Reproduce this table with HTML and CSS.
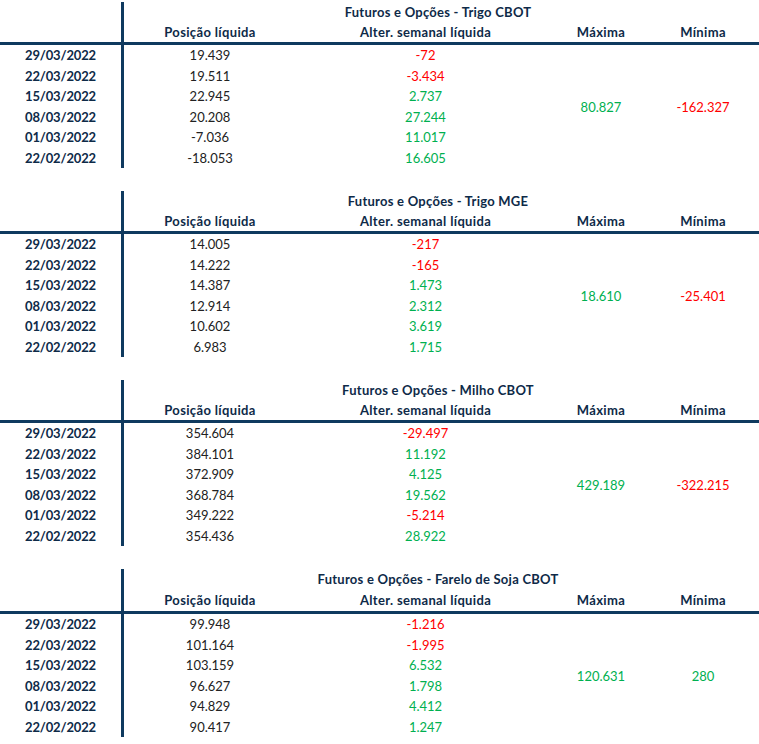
FILE: index.html
```html
<!DOCTYPE html>
<html lang="pt">
<head>
<meta charset="utf-8">
<title>Futuros e Opções</title>
<link rel="stylesheet" href="styles.css">
</head>
<body>
<div class="page">

<table class="cot">
<colgroup><col class="c-date"><col class="c-pos"><col class="c-alt"><col class="c-max"><col class="c-min"></colgroup>
<tr class="r-title"><td class="date"></td><td class="title" colspan="4">Futuros e Opções - Trigo CBOT</td></tr>
<tr class="r-head"><td class="date"></td><td>Posição líquida</td><td>Alter. semanal líquida</td><td>Máxima</td><td>Mínima</td></tr>
<tr class="r-data"><td class="date">29/03/2022</td><td class="pos">19.439</td><td class="neg">-72</td><td class="up big" rowspan="6">80.827</td><td class="neg big" rowspan="6">-162.327</td></tr>
<tr class="r-data"><td class="date">22/03/2022</td><td class="pos">19.511</td><td class="neg">-3.434</td></tr>
<tr class="r-data"><td class="date">15/03/2022</td><td class="pos">22.945</td><td class="up">2.737</td></tr>
<tr class="r-data"><td class="date">08/03/2022</td><td class="pos">20.208</td><td class="up">27.244</td></tr>
<tr class="r-data"><td class="date">01/03/2022</td><td class="pos">-7.036</td><td class="up">11.017</td></tr>
<tr class="r-data"><td class="date">22/02/2022</td><td class="pos">-18.053</td><td class="up">16.605</td></tr>
</table>

<table class="cot">
<colgroup><col class="c-date"><col class="c-pos"><col class="c-alt"><col class="c-max"><col class="c-min"></colgroup>
<tr class="r-title"><td class="date"></td><td class="title" colspan="4">Futuros e Opções - Trigo MGE</td></tr>
<tr class="r-head"><td class="date"></td><td>Posição líquida</td><td>Alter. semanal líquida</td><td>Máxima</td><td>Mínima</td></tr>
<tr class="r-data"><td class="date">29/03/2022</td><td class="pos">14.005</td><td class="neg">-217</td><td class="up big" rowspan="6">18.610</td><td class="neg big" rowspan="6">-25.401</td></tr>
<tr class="r-data"><td class="date">22/03/2022</td><td class="pos">14.222</td><td class="neg">-165</td></tr>
<tr class="r-data"><td class="date">15/03/2022</td><td class="pos">14.387</td><td class="up">1.473</td></tr>
<tr class="r-data"><td class="date">08/03/2022</td><td class="pos">12.914</td><td class="up">2.312</td></tr>
<tr class="r-data"><td class="date">01/03/2022</td><td class="pos">10.602</td><td class="up">3.619</td></tr>
<tr class="r-data"><td class="date">22/02/2022</td><td class="pos">6.983</td><td class="up">1.715</td></tr>
</table>

<table class="cot">
<colgroup><col class="c-date"><col class="c-pos"><col class="c-alt"><col class="c-max"><col class="c-min"></colgroup>
<tr class="r-title"><td class="date"></td><td class="title" colspan="4">Futuros e Opções - Milho CBOT</td></tr>
<tr class="r-head"><td class="date"></td><td>Posição líquida</td><td>Alter. semanal líquida</td><td>Máxima</td><td>Mínima</td></tr>
<tr class="r-data"><td class="date">29/03/2022</td><td class="pos">354.604</td><td class="neg">-29.497</td><td class="up big" rowspan="6">429.189</td><td class="neg big" rowspan="6">-322.215</td></tr>
<tr class="r-data"><td class="date">22/03/2022</td><td class="pos">384.101</td><td class="up">11.192</td></tr>
<tr class="r-data"><td class="date">15/03/2022</td><td class="pos">372.909</td><td class="up">4.125</td></tr>
<tr class="r-data"><td class="date">08/03/2022</td><td class="pos">368.784</td><td class="up">19.562</td></tr>
<tr class="r-data"><td class="date">01/03/2022</td><td class="pos">349.222</td><td class="neg">-5.214</td></tr>
<tr class="r-data"><td class="date">22/02/2022</td><td class="pos">354.436</td><td class="up">28.922</td></tr>
</table>

<table class="cot">
<colgroup><col class="c-date"><col class="c-pos"><col class="c-alt"><col class="c-max"><col class="c-min"></colgroup>
<tr class="r-title"><td class="date"></td><td class="title" colspan="4">Futuros e Opções - Farelo de Soja CBOT</td></tr>
<tr class="r-head"><td class="date"></td><td>Posição líquida</td><td>Alter. semanal líquida</td><td>Máxima</td><td>Mínima</td></tr>
<tr class="r-data"><td class="date">29/03/2022</td><td class="pos">99.948</td><td class="neg">-1.216</td><td class="up big" rowspan="6">120.631</td><td class="up big" rowspan="6">280</td></tr>
<tr class="r-data"><td class="date">22/03/2022</td><td class="pos">101.164</td><td class="neg">-1.995</td></tr>
<tr class="r-data"><td class="date">15/03/2022</td><td class="pos">103.159</td><td class="up">6.532</td></tr>
<tr class="r-data"><td class="date">08/03/2022</td><td class="pos">96.627</td><td class="up">1.798</td></tr>
<tr class="r-data"><td class="date">01/03/2022</td><td class="pos">94.829</td><td class="up">4.412</td></tr>
<tr class="r-data"><td class="date">22/02/2022</td><td class="pos">90.417</td><td class="up">1.247</td></tr>
</table>

</div>
</body>
</html>
```

FILE: styles.css
```css
html, body {
  margin: 0;
  padding: 0;
  background: #ffffff;
}
.page {
  padding-top: 2px;
  font-family: Lato, "Open Sans", "Liberation Sans", sans-serif;
  font-size: 13px;
  color: #222222;
}
.cot {
  width: 759px;
  table-layout: fixed;
  border-collapse: separate;
  border-spacing: 0;
  margin-bottom: 23px;
}
.c-date { width: 124px; }
.c-pos { width: 172px; }
.c-alt { width: 259px; }
.c-max { width: 92px; }
.c-min { width: 112px; }
.cot td {
  padding: 0;
  text-align: center;
  white-space: nowrap;
  line-height: 16px;
  box-sizing: border-box;
}
.r-title td { height: 19px; }
.r-head td {
  height: 24px;
  border-bottom: 3px solid #0f3a5f;
  font-weight: 700;
  color: #0e2a48;
  letter-spacing: 0.35px;
}
.r-data td { height: 20.5px; }
.cot td.date {
  border-right: 3px solid #0f3a5f;
  font-weight: 700;
  color: #0e2a48;
  letter-spacing: -0.15px;
}
.cot td.title {
  font-weight: 700;
  color: #0e2a48;
  padding-right: 7px;
  letter-spacing: 0.25px;
}
.pos { color: #222222; }
.neg { color: #ff0000; }
.up { color: #00b050; }
.big { vertical-align: middle; }
.cot:last-child { margin-bottom: 0; }
.cot:last-child .r-head td { height: 26px; }
```
